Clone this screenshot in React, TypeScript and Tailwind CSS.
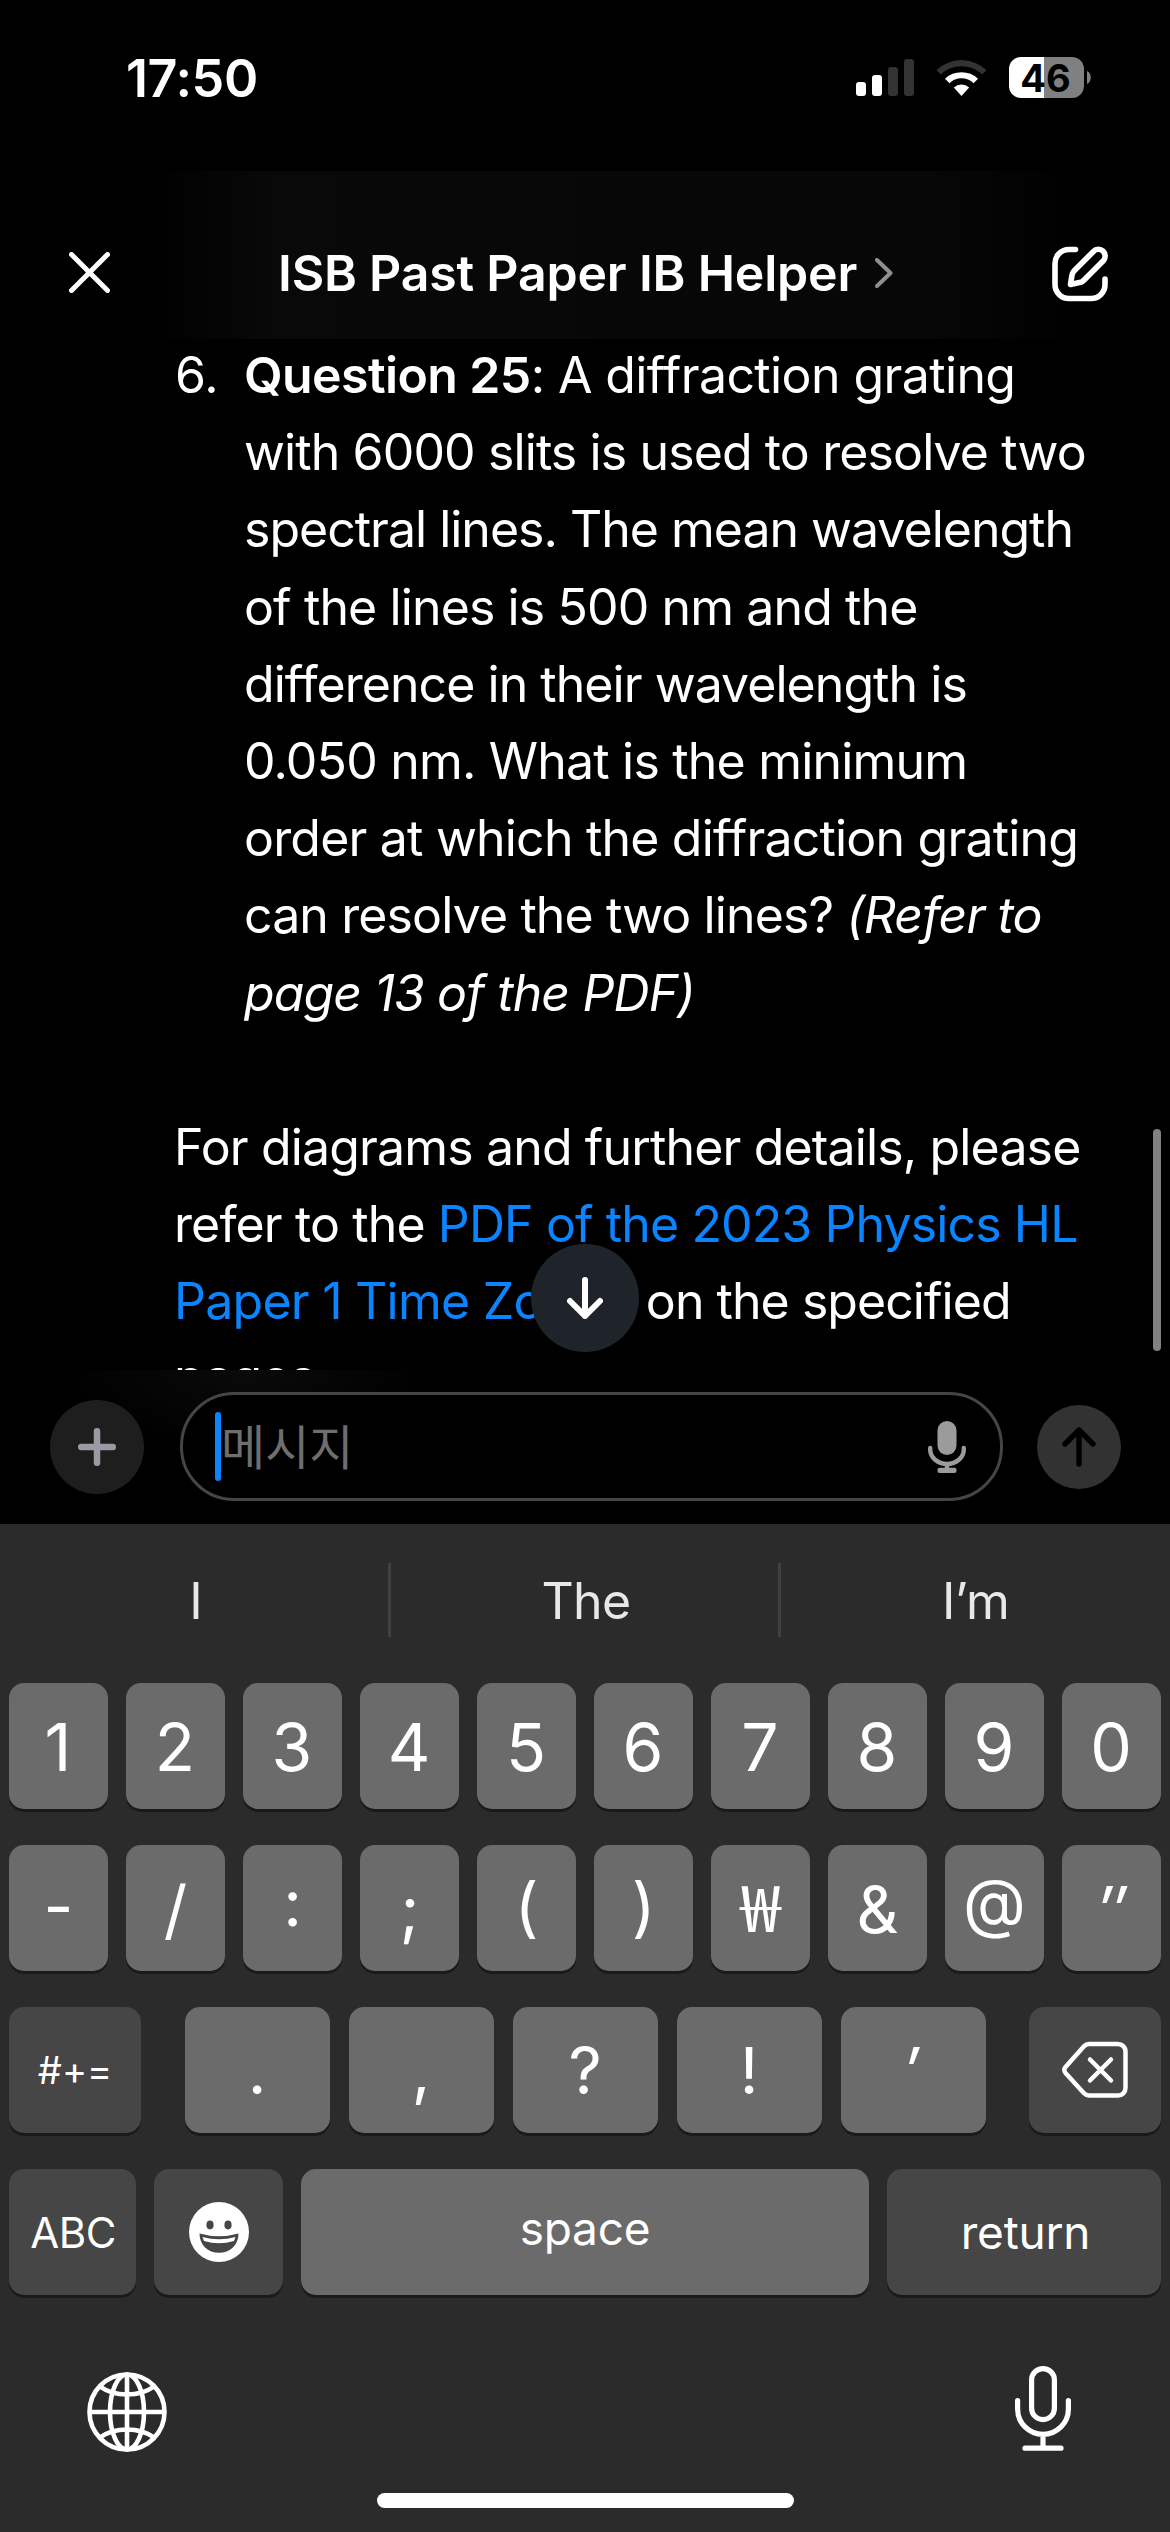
import type { ReactNode } from "react";
import clsx from "clsx";

function StatusBar() {
  return (
    <div className="h-[171px] shrink-0 flex items-start justify-between pl-[126px] pr-[79px] pt-[57px]">
      <span className="mt-px text-[52px] leading-[42px] font-semibold tracking-[-0.4px]">17:50</span>
      <div className="flex items-start">
        <svg className="w-[58px] h-[37px] mt-[2px]" viewBox="0 0 58 37">
          <rect x="0" y="23" width="10" height="14" rx="3" fill="#fff" />
          <rect x="16" y="16" width="10" height="21" rx="3" fill="#fff" />
          <rect x="32" y="8" width="10" height="29" rx="3" fill="#333" />
          <rect x="48" y="0" width="10" height="37" rx="3" fill="#333" />
        </svg>
        <svg className="w-[51px] h-[37px] mt-[2px] ml-[22px]" viewBox="0 0 51 37">
          <path d="M0.5 11.2a36 36 0 0 1 50 0l-4.3 4.3a30 30 0 0 0-41.4 0z" fill="#333" />
          <path d="M9 19.7a24 24 0 0 1 33 0l-4.4 4.5a17.500 17.500 0 0 0-24.200 0z" fill="#fff" />
          <path d="M17.800 28.500a11.500 11.500 0 0 1 15.400 0L25.500 37z" fill="#fff" />
        </svg>
        <div className="ml-[22px] w-[75px] h-[41px] rounded-[12px] bg-[linear-gradient(to_right,#fff_35px,#808080_35px)]">
          <span className="block text-center text-[38px] leading-[42px] font-bold text-black pr-[2px]">46</span>
        </div>
        <svg className="w-[4px] h-[13px] mt-[14px] ml-[3px]" viewBox="0 0 4 13">
          <path d="M0 0c5 2 5 11 0 13z" fill="#808080" />
        </svg>
      </div>
    </div>
  );
}

function Header() {
  return (
    <header className="h-[168px] shrink-0 flex items-center pl-[69px] pr-[61px] bg-[linear-gradient(to_right,#000_150px,#090909_280px,#070707_600px,#070707_930px,#000_1080px)]">
      <svg className="w-[41px] h-[41px] mt-[35px]" viewBox="0 0 41 41" fill="none" stroke="#fff" strokeWidth="5" strokeLinecap="round">
        <path d="M2.500 2.500l36 36M38.500 2.500l-36 36" />
      </svg>
      <h1 className="ml-[168px] mt-[35px] text-[50px] leading-[60px] font-semibold whitespace-nowrap tracking-[-0.2px]">
        ISB Past Paper IB Helper
      </h1>
      <svg className="w-[18px] h-[30px] mt-[36px] ml-[18px]" viewBox="0 0 18 30" fill="none" stroke="#8e8e93" strokeWidth="4" strokeLinecap="round" strokeLinejoin="round">
        <path d="M2 2l13.500 13L2 28" />
      </svg>
      <svg className="ml-auto w-[57px] h-[56px] mt-[37px]" viewBox="0 0 57 56" fill="none" stroke="#fff" strokeWidth="5.600" strokeLinecap="round" strokeLinejoin="round">
        <path d="M23.500 3.500H17A14 14 0 0 0 3 17.500V38.500A14 14 0 0 0 17 52.500H39A14 14 0 0 0 53 38.500V33" />
        <path d="M18.500 38.500l1.500-9.500a8 8 0 0 1 2.200-4.300L41.500 5.400a6.500 6.500 0 0 1 9.800 9.300L31.600 34.400a8 8 0 0 1-4.200 2.200z" />
      </svg>
    </header>
  );
}

function Line({ className, children }: { className?: string; children: ReactNode }) {
  return <span className={clsx("block whitespace-nowrap", className)}>{children}</span>;
}

function Message() {
  return (
    <main className="relative h-[1031px] shrink-0 overflow-hidden pl-[174px] text-[50px] leading-[77.2px] tracking-[-0.88px]">
      <div className="flex -mt-[2px]">
        <span className="w-[70px] shrink-0 tracking-normal pl-px">6.</span>
        <p>
          <Line className="tracking-[-0.6px]">
            <b className="font-semibold">Question 25</b>: A diffraction grating
          </Line>
          <Line>with 6000 slits is used to resolve two</Line>
          <Line className="tracking-[-1px]">spectral lines. The mean wavelength</Line>
          <Line>of the lines is 500 nm and the</Line>
          <Line className="tracking-[-0.95px]">difference in their wavelength is</Line>
          <Line className="tracking-[-0.8px]">0.050 nm. What is the minimum</Line>
          <Line className="tracking-[-0.8px]">order at which the diffraction grating</Line>
          <Line>
            can resolve the two lines? <i>(Refer to</i>
          </Line>
          <Line>
            <i>page 13 of the PDF)</i>
          </Line>
        </p>
      </div>
      <p className="mt-[77px]">
        <Line className="tracking-[-0.85px]">For diagrams and further details, please</Line>
        <Line>
          refer to the <a className="text-[#0a84ff]">PDF of the 2023 Physics HL</a>
        </Line>
        <Line className="tracking-[-0.95px]">
          <a className="text-[#0a84ff] tracking-[-0.75px]">Paper 1 Time Zone 1</a> on the specified
        </Line>
        <Line className="-mt-px">pages.</Line>
      </p>

      {/* Scroll indicator and jump-to-bottom button */}
      <div className="absolute right-[9px] top-[790px] w-[8px] h-[222px] rounded-full bg-[#808080]" />
      <button className="absolute left-[531px] top-[905px] size-[108px] rounded-full bg-[#1f242a] flex items-center justify-center">
        <svg className="w-[36px] h-[42px]" viewBox="0 0 36 42" fill="none" stroke="#fff" strokeWidth="6" strokeLinecap="round" strokeLinejoin="round">
          <path d="M18 3v36M3 24l15 15 15-15" />
        </svg>
      </button>
    </main>
  );
}

function Composer() {
  return (
    <div className="h-[154px] shrink-0 flex items-start pl-[50px] pr-[49px] pt-[22px] bg-[radial-gradient(190px_80px_at_245px_0px,#0a0a0a,#000)]">
      <button className="mt-[8px] size-[94px] rounded-full bg-[#1e1e1e] flex items-center justify-center">
        <svg className="size-[38px]" viewBox="0 0 38 38" stroke="#9a9aa2" strokeWidth="6.500" strokeLinecap="round">
          <path d="M19 3.250v31.500M3.250 19h31.500" />
        </svg>
      </button>
      <div className="ml-[36px] w-[823px] h-[109px] rounded-[54px] border-[3px] border-[#454545] bg-black flex items-center pl-[32px] pr-[34px]">
        <span className="w-[6px] h-[69px] rounded-full bg-[#0a84ff]" />
        <span className="pb-[6px] text-[48px] leading-[60px] text-[#6e6e6e] font-normal font-['Noto_Sans_CJK_KR',sans-serif]">메시지</span>
        <svg className="ml-auto w-[38px] h-[52px]" viewBox="0 0 38 52" fill="#9b9b9b">
          <rect x="9.500" y="0" width="19" height="34" rx="9.500" />
          <path d="M2.200 27v1.500a16.800 14.500 0 0 0 33.600 0V27" fill="none" stroke="#9b9b9b" strokeWidth="4.400" strokeLinecap="round" />
          <rect x="16.800" y="42" width="4.400" height="6" />
          <rect x="9.500" y="46.800" width="19" height="5.200" rx="2" />
        </svg>
      </div>
      <button className="ml-auto mt-[13px] size-[84px] rounded-full bg-[#323232] flex items-center justify-center">
        <svg className="w-[34px] h-[40px]" viewBox="0 0 34 40" fill="none" stroke="#000" strokeWidth="5.400" strokeLinecap="round" strokeLinejoin="round">
          <path d="M17 37V3M3 17L17 3l14 14" />
        </svg>
      </button>
    </div>
  );
}

function Key({ dark, className, children }: { dark?: boolean; className?: string; children: ReactNode }) {
  return (
    <button
      className={clsx(
        "h-[126px] rounded-[15px] shadow-[0_3px_0_#1a1a1a] flex items-center justify-center shrink-0",
        dark ? "bg-[#464646]" : "bg-[#6b6b6b]",
        className
      )}
    >
      {children}
    </button>
  );
}

const digits = ["1", "2", "3", "4", "5", "6", "7", "8", "9", "0"];
const symbols = ["-", "/", ":", ";", "(", ")", "₩", "&", "@", "″"];
const punctuation = [".", ",", "?", "!", "′"];

function Keyboard() {
  return (
    <section className="grow bg-[#2b2b2b] flex flex-col">
      <div className="h-[159px] pt-[39px] flex text-[50px] leading-[76px] text-[#e8e8e8] tracking-[-0.7px]">
        <span className="w-[391px] h-[74px] text-center border-r-[3px] border-[#404040] pl-[3px]">I</span>
        <span className="w-[390px] h-[74px] text-center border-r-[3px] border-[#404040] pl-[3px]">The</span>
        <span className="w-[389px] h-[74px] text-center">I’m</span>
      </div>

      <div className="flex flex-col gap-[36px] px-[9px]">
        <div className="flex justify-between text-[66px]">
          {digits.map((d) => (
            <Key key={d} className="w-[99px] pt-[3px] pr-[1px]">{d}</Key>
          ))}
        </div>
        <div className="flex justify-between text-[65px] [font-feature-settings:'case']">
          {symbols.map((s) => (
            <Key key={s} className={clsx("w-[99px] pt-[3px]", s === "″" && "italic")}>
              {s === "₩" ? (
                <span className="font-['Noto_Sans_CJK_KR',sans-serif] text-[64px] leading-[70px] pb-[12px] scale-x-[1.12]">{s}</span>
              ) : (
                s
              )}
            </Key>
          ))}
        </div>
        <div className="flex justify-between text-[65px]">
          <Key dark className="w-[132px] text-[38px]">#+=</Key>
          <div className="flex gap-[19px]">
            {punctuation.map((p) => (
              <Key key={p} className={clsx("w-[145px] pt-[2px]", p === "′" && "italic pr-[4px]")}>{p}</Key>
            ))}
          </div>
          <Key dark className="w-[132px]">
            <svg className="w-[66px] h-[58px]" viewBox="0 -2 66 58" fill="none" stroke="#fff" strokeWidth="4.500" strokeLinecap="round" strokeLinejoin="round">
              <path d="M27 1H56a7.500 7.500 0 0 1 7.500 7.500V45a7.500 7.500 0 0 1-7.500 7.500H27a7 7 0 0 1-5-2.200L3.500 30a4.500 4.500 0 0 1 0-6L22 3.200a7 7 0 0 1 5-2.200z" />
              <path d="M28 16.500l21 21M49 16.500l-21 21" />
            </svg>
          </Key>
        </div>
        <div className="flex justify-between text-[42px]">
          <Key dark className="w-[127px] tracking-[-0.5px] pl-px">ABC</Key>
          <Key dark className="w-[129px]">
            <svg className="size-[60px]" viewBox="0 0 60 60">
              <circle cx="30" cy="30" r="30" fill="#fff" />
              <ellipse cx="21" cy="23" rx="3.600" ry="4.400" fill="#464646" />
              <ellipse cx="39" cy="23" rx="3.600" ry="4.400" fill="#464646" />
              <path d="M10.500 31.500Q30 37 49.500 31.500C49.500 43 41 50.800 30 50.800S10.500 43 10.500 31.500z" fill="#464646" />
              <path d="M13.500 35Q30 39.500 46.500 35L45 39Q30 43.500 15 39z" fill="#fff" />
            </svg>
          </Key>
          <Key className="w-[568px] text-[46px] pb-[8px] tracking-[-0.3px]">space</Key>
          <Key dark className="w-[274px] text-[46px] tracking-[-0.2px] pl-[3px]">return</Key>
        </div>
      </div>

      <div className="mt-[71px] flex items-start justify-between pl-[87px] pr-[99px]">
        <svg className="mt-[6px] size-[80px]" viewBox="0 0 80 80" fill="none" stroke="#fff" strokeWidth="4.600">
          <circle cx="40" cy="40" r="37.500" />
          <ellipse cx="40" cy="40" rx="17" ry="37.500" />
          <path d="M40 2.500v75M2.500 40h75M13 14.500Q24 22.500 40 22.500T67 14.500M13 65.500Q24 57.500 40 57.500T67 65.500" />
        </svg>
        <svg className="w-[56px] h-[85px]" viewBox="0 0 56 85" fill="none" stroke="#fff" strokeWidth="5.200" strokeLinecap="round">
          <rect x="16.600" y="2.600" width="22.800" height="51" rx="11.400" />
          <path d="M2.600 34.500V43a25.400 25.400 0 0 0 50.800 0v-8.500M28 69v13M10 82.200h36" />
        </svg>
      </div>
      <div className="mt-[41px] w-[417px] h-[15px] rounded-full bg-white self-center" />
    </section>
  );
}

export default function App() {
  return (
    <div className="w-[1170px] h-[2532px] overflow-hidden flex flex-col bg-black text-white font-['Inter','Noto_Sans_CJK_KR',sans-serif]">
      <StatusBar />
      <Header />
      <Message />
      <Composer />
      <Keyboard />
    </div>
  );
}
